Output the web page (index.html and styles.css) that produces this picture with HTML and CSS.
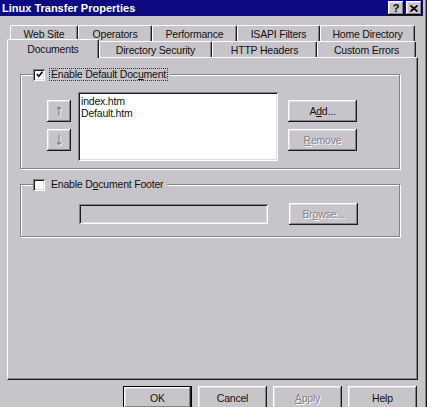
FILE: index.html
```html
<!DOCTYPE html>
<html>
<head>
<meta charset="utf-8">
<title>Linux Transfer Properties</title>
<link rel="stylesheet" href="styles.css">
</head>
<body>
<div class="window">
  <div class="titlebar">
    <span class="title">Linux Transfer Properties</span>
    <div class="caption-buttons">
      <span class="cbtn help">?</span>
      <span class="cbtn close">
        <svg width="8" height="7" viewBox="0 0 8 7"><path d="M0.5 0.5 L7.5 6.5 M7.5 0.5 L0.5 6.5" stroke="#000" stroke-width="1.7" fill="none"/></svg>
      </span>
    </div>
  </div>

  <div class="client">
    <div class="tabs">
      <div class="tab-row back">
        <div class="tab w-website">Web Site</div>
        <div class="tab w-operators">Operators</div>
        <div class="tab w-performance">Performance</div>
        <div class="tab w-isapi">ISAPI Filters</div>
        <div class="tab w-home">Home Directory</div>
      </div>
      <div class="tab-row front">
        <div class="tab selected w-documents">Documents</div>
        <div class="tab w-dirsec">Directory Security</div>
        <div class="tab w-http">HTTP Headers</div>
        <div class="tab w-custom">Custom Errors</div>
      </div>
    </div>

    <div class="panel">
      <div class="group group-default">
        <div class="legend">
          <span class="checkbox checked">
            <svg width="7" height="7" viewBox="0 0 7 7"><path d="M0.8 3 L2.8 5.2 L6.4 0.8" stroke="#000" stroke-width="1.6" fill="none"/></svg>
          </span>
          <span class="label focused">Enable Default Doc<u>u</u>ment</span>
        </div>
        <div class="group-row">
          <div class="arrow-col">
            <span class="btn arrow-btn">
              <svg width="9" height="13" viewBox="0 0 9 13">
                <path d="M5 2.5 V12 M3 5 L5 3 L7 5" stroke="#fff" stroke-width="1" fill="none"/>
                <path d="M4 1.5 V11 M2 4 L4 2 L6 4" stroke="#858285" stroke-width="1.2" fill="none"/>
              </svg>
            </span>
            <span class="btn arrow-btn">
              <svg width="9" height="13" viewBox="0 0 9 13">
                <path d="M5 2 V11.5 M3 9.5 L5 11.5 L7 9.5" stroke="#fff" stroke-width="1" fill="none"/>
                <path d="M4 1 V10.5 M2 8.5 L4 10.5 L6 8.5" stroke="#858285" stroke-width="1.2" fill="none"/>
              </svg>
            </span>
          </div>
          <div class="listbox">
            <div class="list-item">index.htm</div>
            <div class="list-item">Default.htm</div>
          </div>
          <div class="side-col">
            <span class="btn push">A<u>d</u>d...</span>
            <span class="btn push disabled"><u>R</u>emove</span>
          </div>
        </div>
      </div>

      <div class="group group-footer">
        <div class="legend">
          <span class="checkbox"></span>
          <span class="label">Enable D<u>o</u>cument Footer</span>
        </div>
        <div class="group-row footer-row">
          <span class="textfield"></span>
          <span class="btn push disabled browse">Br<u>o</u>wse...</span>
        </div>
      </div>
    </div>

    <div class="dialog-buttons">
      <span class="btn push default">OK</span>
      <span class="btn push">Cancel</span>
      <span class="btn push disabled"><u>A</u>pply</span>
      <span class="btn push">Help</span>
    </div>
  </div>
</div>
</body>
</html>
```

FILE: styles.css
```css
* {
  box-sizing: border-box;
}

html,
body {
  margin: 0;
  background: #ffffff;
}

body {
  width: 442px;
  height: 407px;
  overflow: hidden;
  font-family: "Liberation Sans", Arial, sans-serif;
  font-size: 10.5px;
  letter-spacing: -0.2px;
  color: #111;
}

/* Dialog frame */
.window {
  width: 427px;
  height: 430px;
  background: #c8c5ca;
  border-right: 1px solid #1c1c1c;
  box-shadow: inset -1px 0 0 #858285;
  padding-right: 3px;
  display: flex;
  flex-direction: column;
}

.titlebar {
  height: 16px;
  background: #0b0a80;
  display: flex;
  align-items: center;
  justify-content: space-between;
  padding: 0 1px 0 2px;
}

.title {
  color: #fff;
  font-weight: bold;
  font-size: 11px;
  letter-spacing: 0;
}

.caption-buttons {
  display: flex;
  gap: 2px;
}

.cbtn {
  width: 16px;
  height: 14px;
  background: #c8c5ca;
  box-shadow: inset -1px -1px 0 #000, inset 1px 1px 0 #fff,
    inset -2px -2px 0 #858285, inset 2px 2px 0 #dfdcdf;
  display: flex;
  align-items: center;
  justify-content: center;
  font-weight: bold;
  font-size: 11px;
  line-height: 1;
  color: #000;
}

/* Client area */
.client {
  flex: 1;
  padding: 9px 0 0 7px;
  display: flex;
  flex-direction: column;
}

/* Property sheet tabs */
.tabs {
  display: flex;
  flex-direction: column;
}

.tab-row {
  display: flex;
  height: 16px;
}

.tab-row.back {
  padding-left: 3px;
}

.tab {
  height: 16px;
  background: #c8c5ca;
  border-top: 1px solid #fff;
  border-left: 1px solid #fff;
  border-right: 1px solid #1c1c1c;
  box-shadow: inset -1px 0 0 #858285;
  border-radius: 2px 2px 0 0;
  display: flex;
  align-items: center;
  justify-content: center;
  white-space: nowrap;
}

.tab.selected {
  position: relative;
  z-index: 1;
  height: 19px;
  margin-top: -2px;
  margin-bottom: -1px;
}

.w-website { width: 68px; }
.w-operators { width: 74px; }
.w-performance { width: 85px; }
.w-isapi { width: 83px; }
.w-home { width: 95px; }
.w-documents { width: 92px; }
.w-dirsec { width: 113px; }
.w-http { width: 105px; }
.w-custom { width: 99px; }

/* Page body under the tabs */
.panel {
  width: 411px;
  height: 323px;
  border-top: 1px solid #fff;
  border-left: 1px solid #fff;
  border-right: 1px solid #1c1c1c;
  border-bottom: 1px solid #1c1c1c;
  box-shadow: inset -1px -1px 0 #858285;
  padding: 16px 0 0 12px;
  display: flex;
  flex-direction: column;
}

/* Etched group boxes */
.group {
  width: 380px;
  border: 1px solid #858285;
  box-shadow: inset 1px 1px 0 #fff, 1px 1px 0 #fff;
  display: flex;
  flex-direction: column;
}

.group-default {
  padding-bottom: 7px;
}

.group-footer {
  margin-top: 15px;
  padding-bottom: 11px;
}

.legend {
  align-self: flex-start;
  height: 13px;
  margin: -7px 0 0 12px;
  padding-right: 2px;
  background: #c8c5ca;
  display: flex;
  align-items: center;
  gap: 4px;
}

.checkbox {
  width: 12px;
  height: 12px;
  background: #fff;
  box-shadow: inset 1px 1px 0 #858285, inset -1px -1px 0 #fff,
    inset 2px 2px 0 #1c1c1c, inset -2px -2px 0 #dfdcdf;
  display: flex;
  align-items: center;
  justify-content: center;
}

.label {
  padding: 0 1px;
  line-height: 11px;
  border: 1px solid transparent;
  white-space: nowrap;
}

.label.focused {
  border: 1px dotted #333;
}

.group-row {
  display: flex;
  align-items: flex-start;
  margin-top: 11px;
  padding-left: 26px;
}

.arrow-col,
.side-col {
  display: flex;
  flex-direction: column;
  gap: 7px;
  margin-top: 8px;
}

.side-col {
  margin-left: 10px;
}

/* Raised push buttons */
.btn {
  background: #c8c5ca;
  box-shadow: inset -1px -1px 0 #1c1c1c, inset 1px 1px 0 #fff,
    inset -2px -2px 0 #858285, inset 2px 2px 0 #dfdcdf;
  display: flex;
  align-items: center;
  justify-content: center;
  white-space: nowrap;
}

.arrow-btn {
  width: 24px;
  height: 22px;
}

.push {
  width: 69px;
  height: 22px;
}

.push.default {
  border: 1px solid #000;
}

.disabled {
  color: #858285;
  text-shadow: 1px 1px 0 #fff;
}

.listbox {
  width: 200px;
  height: 69px;
  margin-left: 7px;
  background: #fff;
  box-shadow: inset 1px 1px 0 #858285, inset -1px -1px 0 #fff,
    inset 2px 2px 0 #1c1c1c, inset -2px -2px 0 #dfdcdf;
  padding: 3px 3px;
}

.list-item {
  line-height: 12px;
}

.footer-row {
  align-items: center;
  margin-top: 12px;
  padding-left: 58px;
}

.textfield {
  width: 189px;
  height: 20px;
  background: #c8c5ca;
  box-shadow: inset 1px 1px 0 #858285, inset -1px -1px 0 #fff,
    inset 2px 2px 0 #1c1c1c, inset -2px -2px 0 #dfdcdf;
}

.browse {
  margin-left: 21px;
}

/* OK / Cancel / Apply / Help */
.dialog-buttons {
  width: 411px;
  margin-top: 6px;
  padding-right: 1px;
  display: flex;
  justify-content: flex-end;
  gap: 6px;
}

.dialog-buttons .push {
  height: 23px;
}
```
